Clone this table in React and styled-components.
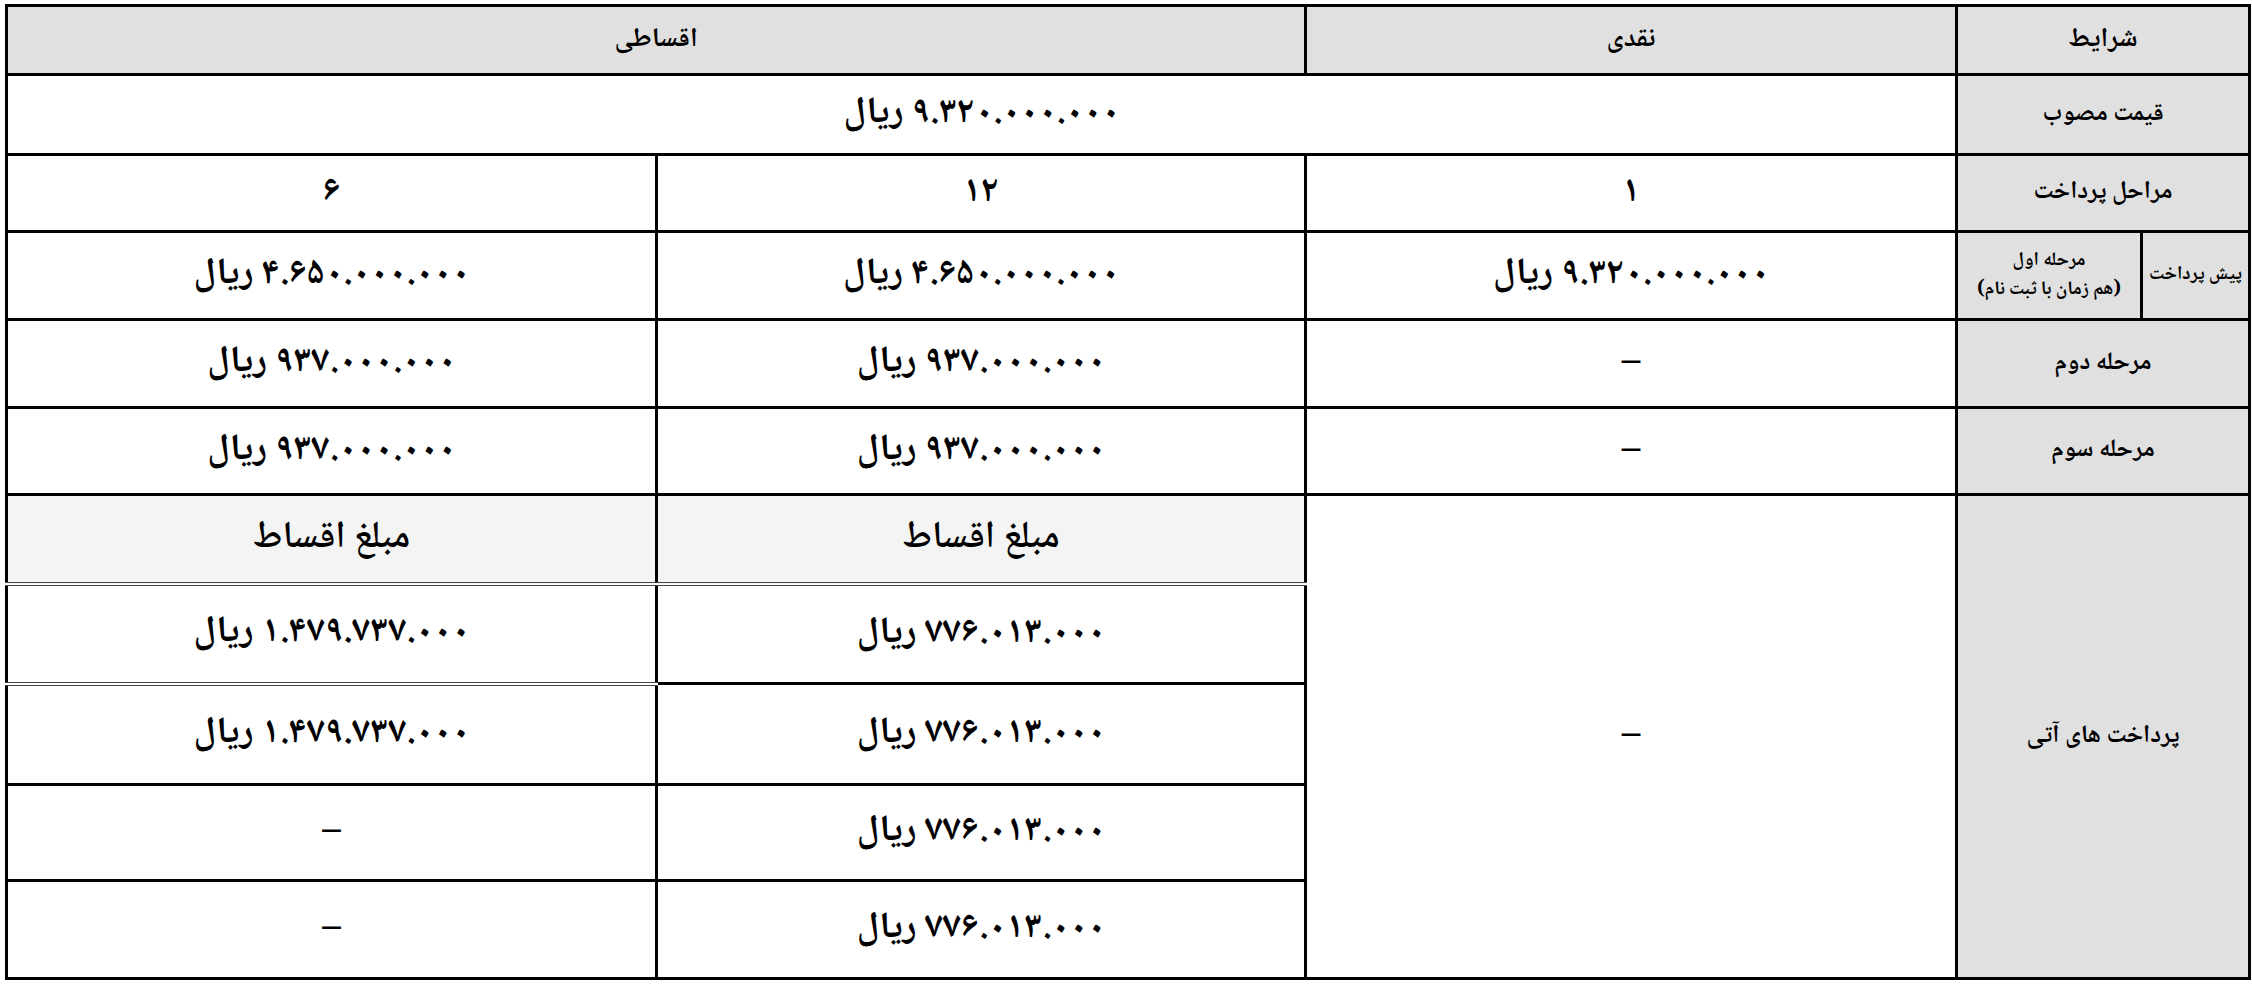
import styled, { createGlobalStyle } from "styled-components";

const GlobalStyle = createGlobalStyle`
  html, body {
    margin: 0;
    background: #fff;
  }
  body {
    padding: 4px 4px 0 5px;
    font-family: "Noto Naskh Arabic", "Noto Sans Arabic", "DejaVu Sans", sans-serif;
    color: #000;
  }
`;

const PriceTable = styled.table`
  direction: rtl;
  width: 2243px;
  table-layout: fixed;
  border-collapse: collapse;
  border: 3px solid #000;
`;

const Row = styled.tr`
  height: ${(p) => p.$h}px;
`;

const Cell = styled.td`
  border: 3px solid #000;
  text-align: center;
  vertical-align: middle;
  padding: 0 4px;
  font-weight: 700;
  font-size: 37px;
  line-height: 1.2;
  background: #fff;
  white-space: nowrap;
`;

const HeadCell = styled(Cell)`
  background: #e0e0e0;
  font-size: 27px;
`;

const LabelCell = styled(Cell)`
  background: #e0e0e0;
  font-size: 25px;
  line-height: 1.5;
  padding: 0 2px;
`;

// the narrow split cells of the down-payment row
const SplitLabel = styled(LabelCell)`
  font-size: 19px;
  padding: 0;
  letter-spacing: -0.3px;
`;

const SubHead = styled(Cell)`
  background: #f4f4f4;
  font-weight: 600;
  font-size: 38px;
`;

// lower part of the installment columns: thinner separators
const InstCell = styled(Cell)`
  border-top: ${(p) =>
    p.$top === "double" ? "4px double #444" : "1px solid #444"};
`;

const Line = styled.div`
  display: block;
`;

export default function App() {
  const dash = "–";
  const price = "۹.۳۲۰.۰۰۰.۰۰۰ ریال";
  const half = "۴.۶۵۰.۰۰۰.۰۰۰ ریال";
  const step = "۹۳۷.۰۰۰.۰۰۰ ریال";
  const twelve = "۷۷۶.۰۱۳.۰۰۰ ریال";
  const six = "۱.۴۷۹.۷۳۷.۰۰۰ ریال";

  return (
    <>
      <GlobalStyle />
      <PriceTable>
        <colgroup>
          <col style={{ width: 108 }} />
          <col style={{ width: 185 }} />
          <col style={{ width: 651 }} />
          <col style={{ width: 649 }} />
          <col style={{ width: 650 }} />
        </colgroup>
        <tbody>
          <Row $h={69}>
            <HeadCell colSpan={2}>شرایط</HeadCell>
            <HeadCell>نقدی</HeadCell>
            <HeadCell colSpan={2}>اقساطی</HeadCell>
          </Row>
          <Row $h={80}>
            <LabelCell colSpan={2}>قیمت مصوب</LabelCell>
            <Cell colSpan={3}>{price}</Cell>
          </Row>
          <Row $h={77}>
            <LabelCell colSpan={2}>مراحل پرداخت</LabelCell>
            <Cell>۱</Cell>
            <Cell>۱۲</Cell>
            <Cell>۶</Cell>
          </Row>
          <Row $h={88}>
            <SplitLabel>پیش پرداخت</SplitLabel>
            <SplitLabel>
              <Line>مرحله اول</Line>
              <Line>(هم زمان با ثبت نام)</Line>
            </SplitLabel>
            <Cell>{price}</Cell>
            <Cell>{half}</Cell>
            <Cell>{half}</Cell>
          </Row>
          <Row $h={88}>
            <LabelCell colSpan={2}>مرحله دوم</LabelCell>
            <Cell>{dash}</Cell>
            <Cell>{step}</Cell>
            <Cell>{step}</Cell>
          </Row>
          <Row $h={87}>
            <LabelCell colSpan={2}>مرحله سوم</LabelCell>
            <Cell>{dash}</Cell>
            <Cell>{step}</Cell>
            <Cell>{step}</Cell>
          </Row>
          <Row $h={89}>
            <LabelCell colSpan={2} rowSpan={5}>
              پرداخت های آتی
            </LabelCell>
            <Cell rowSpan={5}>{dash}</Cell>
            <SubHead>مبلغ اقساط</SubHead>
            <SubHead>مبلغ اقساط</SubHead>
          </Row>
          <Row $h={100}>
            <InstCell $top="double">{twelve}</InstCell>
            <InstCell $top="double">{six}</InstCell>
          </Row>
          <Row $h={101}>
            <InstCell>{twelve}</InstCell>
            <InstCell $top="double">{six}</InstCell>
          </Row>
          <Row $h={96}>
            <InstCell>{twelve}</InstCell>
            <InstCell>{dash}</InstCell>
          </Row>
          <Row $h={98}>
            <InstCell>{twelve}</InstCell>
            <InstCell>{dash}</InstCell>
          </Row>
        </tbody>
      </PriceTable>
    </>
  );
}
